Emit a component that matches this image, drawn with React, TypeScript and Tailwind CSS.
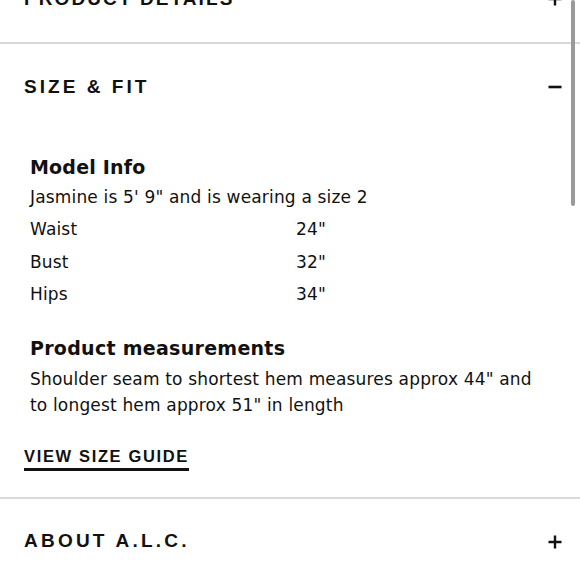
import React from "react";

// ─── Icons ────────────────────────────────────────────────────────────────────

const PlusIcon = () => (
    <svg width="14" height="14" viewBox="0 0 14 14" className="shrink-0">
        <path d="M7 0.5V13.5M0.5 7H13.5" stroke="#111" strokeWidth="2.4" />
    </svg>
);

const MinusIcon = () => (
    <svg width="14" height="14" viewBox="0 0 14 14" className="shrink-0">
        <path d="M0.5 7H13.5" stroke="#111" strokeWidth="2.6" />
    </svg>
);

// ─── Data ─────────────────────────────────────────────────────────────────────

const MEASUREMENTS = [
    { label: "Waist", value: '24"' },
    { label: "Bust", value: '32"' },
    { label: "Hips", value: '34"' },
];

const headFont = "[font-family:'Liberation_Sans',Arial,sans-serif]";
const bodyFont = "[font-family:'DejaVu_Sans',sans-serif]";

// ─── Row header ───────────────────────────────────────────────────────────────

const AccordionHeader = ({
    title,
    open,
    tracking = "tracking-[0.17em]",
}: {
    title: string;
    open?: boolean;
    tracking?: string;
}) => (
    <div className="flex items-center justify-between h-[86px] pl-6 pr-[18px]">
        <span className={`${headFont} text-[19px] font-bold ${tracking} text-[#111]`}>{title}</span>
        {open ? <MinusIcon /> : <PlusIcon />}
    </div>
);

// ─── Component ────────────────────────────────────────────────────────────────

const App = () => {
    return (
        <div className="relative w-[580px] h-[580px] overflow-hidden bg-white">
            <div className="-mt-[44px]">
                <AccordionHeader title="PRODUCT DETAILS" tracking="tracking-[0.11em]" />
            </div>
            <div className="h-[2px] bg-[#d9d9d9]" />

            <AccordionHeader title="SIZE & FIT" open tracking="tracking-[0.16em]" />

            <div className={`${bodyFont} text-[#111] pt-[23px]`}>
                <div className="pl-[30px] pr-[35px]">
                    <h3 className="text-[19px] font-bold leading-[28px] tracking-[0.01em]">Model Info</h3>
                    <p className="text-[17px] leading-[32px] tracking-[0.01em]">
                        Jasmine is 5' 9" and is wearing a size 2
                    </p>
                    {MEASUREMENTS.map((m) => (
                        <div
                            key={m.label}
                            className="grid grid-cols-[266px_1fr] text-[17px] leading-[32.5px] tracking-[0.01em]"
                        >
                            <span>{m.label}</span>
                            <span>{m.value}</span>
                        </div>
                    ))}

                    <h3 className="mt-[23px] text-[19px] font-bold leading-[28px] tracking-[0.015em]">
                        Product measurements
                    </h3>
                    <p className="mt-[4px] text-[17px] leading-[26px] tracking-[0.01em]">
                        Shoulder seam to shortest hem measures approx 44" and to longest hem approx 51" in length
                    </p>
                </div>

                <div className="mt-[27px] pl-6">
                    <span
                        className={`${headFont} inline-block text-[16.5px] font-bold tracking-[0.1em] leading-[20px] pb-[2px] border-b-[3px] border-[#111]`}
                    >
                        VIEW SIZE GUIDE
                    </span>
                </div>
            </div>

            <div className="mt-[26px] h-[2px] bg-[#d9d9d9]" />
            <AccordionHeader title="ABOUT A.L.C." />

            {/* scrollbar thumb */}
            <div className="absolute right-[5px] top-0 w-[4px] h-[206px] rounded-full bg-[#9a9a9a]" />
        </div>
    );
};

export default App;
